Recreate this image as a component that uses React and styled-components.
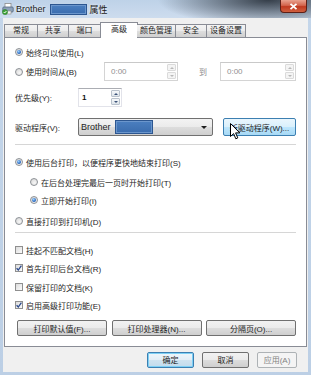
import React from 'react'
import styled, { createGlobalStyle, css } from 'styled-components'

const GlobalStyle = createGlobalStyle`
  html, body {
    margin: 0;
    padding: 0;
  }
  body {
    width: 311px;
    height: 375px;
    overflow: hidden;
    font-family: "Liberation Sans", "Noto Sans CJK SC", sans-serif;
    font-size: 8px;
    color: #1e1e1e;
  }
`

const Window = styled.div`
  width: 311px;
  height: 375px;
  display: flex;
  flex-direction: column;
  background: linear-gradient(#c4d6ea, #bccfe5);
`

const TitleBar = styled.div`
  height: 18px;
  flex: none;
  display: flex;
  align-items: center;
  padding-left: 2px;
  background:
    radial-gradient(ellipse 110px 26px at 268px 0, rgba(38, 46, 56, 0.9), rgba(38, 46, 56, 0)),
    linear-gradient(#bed2e8, #cddcee);
`

const TitleText = styled.span`
  font-size: 9px;
  color: #1a1a1a;
  margin-left: ${p => p.$ml || 0}px;
  text-shadow: 0 0 3px rgba(255, 255, 255, 0.9);
`

const Redacted = styled.span`
  display: inline-block;
  width: ${p => p.$w}px;
  height: ${p => p.$h}px;
  margin-left: ${p => p.$ml || 0}px;
  background: linear-gradient(#4b7fc0, #3a6cae);
  border: 1px solid #2c5690;
  box-shadow: inset 0 0 0 1px #6b96cc;
  box-sizing: border-box;
`

const CloseButton = styled.div`
  margin-left: auto;
  margin-right: 4px;
  align-self: flex-start;
  width: 27px;
  height: 13px;
  box-sizing: border-box;
  border: 1px solid #5e1f16;
  border-top: none;
  border-radius: 0 0 4px 4px;
  background: linear-gradient(#e9a28f, #d3654d 45%, #c03a20 55%, #d0603f);
  display: flex;
  align-items: center;
  justify-content: center;
`

const Client = styled.div`
  flex: 1;
  margin: 0 3px 3px 3px;
  padding: 4px 1px 0 1px;
  background: #f0f0f0;
  display: flex;
  flex-direction: column;
`

const TabStrip = styled.div`
  display: flex;
  align-items: flex-end;
  height: 16px;
  margin-bottom: -1px;
  position: relative;
  z-index: 1;
`

const Tab = styled.div`
  width: ${p => p.$w}px;
  box-sizing: border-box;
  border: 1px solid #898c95;
  border-bottom: none;
  border-left-width: ${p => (p.$first ? 1 : 0)}px;
  text-align: center;
  font-size: 8px;
  ${p =>
    p.$active
      ? css`
          height: 16px;
          line-height: 14px;
          background: #fff;
          border-left-width: 1px;
          margin-left: -1px;
          margin-right: -1px;
          width: ${p.$w + 2}px;
        `
      : css`
          height: 13px;
          margin-bottom: 1px;
          line-height: 12px;
          background: linear-gradient(#f4f4f4, #ebebeb 50%, #dedede 50%, #d0d0d0);
        `}
`

const Panel = styled.div`
  flex: 1;
  background: #fff;
  border: 1px solid #898c95;
  padding: 0 0 0 10px;
  display: flex;
  flex-direction: column;
`

const Row = styled.div`
  display: flex;
  align-items: center;
  height: ${p => p.$h || 14}px;
  margin-top: ${p => p.$mt || 0}px;
  padding-left: ${p => p.$indent || 0}px;
`

const Cell = styled.div`
  width: ${p => p.$w}px;
  flex: none;
  display: flex;
  align-items: center;
  padding-left: ${p => p.$pl || 0}px;
  box-sizing: border-box;
  color: ${p => (p.$disabled ? '#8d8d8d' : '#1e1e1e')};
`

const Separator = styled.div`
  height: 1px;
  margin: ${p => p.$mt}px 10px 0 0;
  background: #d6d6d6;
`

const RadioDot = styled.span`
  width: 8px;
  height: 8px;
  flex: none;
  box-sizing: border-box;
  border-radius: 50%;
  border: 1px solid #8d9196;
  background: radial-gradient(circle at 60% 65%, #f7f7f7, #d4d4d4);
  margin-right: 3px;
  display: flex;
  align-items: center;
  justify-content: center;
  ${p =>
    p.$checked &&
    css`
      &::after {
        content: '';
        width: 4px;
        height: 4px;
        border-radius: 50%;
        background: radial-gradient(circle at 40% 35%, #9fd4ff, #2a6bc4 60%, #16418a);
      }
    `}
`

const Box = styled.span`
  width: 8px;
  height: 8px;
  flex: none;
  box-sizing: border-box;
  border: 1px solid #8f8f8f;
  background: linear-gradient(135deg, #dcdcdc, #fbfbfb);
  margin-right: 3px;
  display: flex;
  align-items: center;
  justify-content: center;
`

const SpinBox = styled.div`
  width: ${p => p.$w}px;
  height: ${p => p.$h}px;
  flex: none;
  box-sizing: border-box;
  display: flex;
  align-items: center;
  background: #fff;
  border: 1px solid ${p => (p.$disabled ? '#d4d4d4' : '#e2e3ea')};
  border-top-color: ${p => (p.$disabled ? '#c9c9c9' : '#abadb3')};
  padding: 1px;
`

const SpinValue = styled.span`
  flex: 1;
  padding-left: ${p => p.$pl}px;
  font-size: 8px;
  color: ${p => (p.$disabled ? '#8f8f8f' : '#111')};
  font-weight: ${p => (p.$disabled ? 400 : 700)};
`

const SpinButtons = styled.div`
  width: 9px;
  align-self: stretch;
  display: flex;
  flex-direction: column;
  gap: 1px;
`

const SpinHalf = styled.div`
  flex: 1;
  border: 1px solid ${p => (p.$disabled ? '#dadada' : '#b9c2cc')};
  border-radius: 1px;
  background: ${p => (p.$disabled ? '#f4f4f4' : 'linear-gradient(#f6f8fa, #dde4ea)')};
  display: flex;
  align-items: center;
  justify-content: center;
  &::after {
    content: '';
    border-left: 2px solid transparent;
    border-right: 2px solid transparent;
    ${p => (p.$down ? 'border-top' : 'border-bottom')}: 2px solid
      ${p => (p.$disabled ? '#b8b8b8' : '#3c5278')};
  }
`

const Combo = styled.div`
  width: 135px;
  height: 18px;
  flex: none;
  box-sizing: border-box;
  border: 1px solid #707070;
  border-radius: 2px;
  background: linear-gradient(#f3f3f3, #ebebeb 50%, #dddddd 50%, #cfcfcf);
  display: flex;
  align-items: center;
  padding: 0 5px 0 2px;
  font-size: 9px;
  &::after {
    content: '';
    margin-left: auto;
    border-left: 3px solid transparent;
    border-right: 3px solid transparent;
    border-top: 3px solid #1e1e1e;
  }
`

const Button = styled.div`
  position: relative;
  width: ${p => p.$w}px;
  height: ${p => p.$h || 16}px;
  flex: none;
  box-sizing: border-box;
  border: 1px solid #707070;
  border-radius: 2px;
  background: linear-gradient(#f2f2f2, #ebebeb 50%, #dddddd 50%, #cfcfcf);
  display: flex;
  align-items: center;
  justify-content: center;
  font-size: 8px;
  color: #1e1e1e;
  ${p =>
    p.$hot &&
    css`
      border-color: #3c7fb1;
      background: linear-gradient(#eaf6fd, #d9f0fc 50%, #bee6fd 50%, #a7d9f5);
    `}
  ${p =>
    p.$default &&
    css`
      border-color: #3c7fb1;
      box-shadow: inset 0 0 0 1px #7dd0f5;
      background: linear-gradient(#eef6fb, #e2eef6 50%, #cfe3f0 50%, #c2dbec);
    `}
  ${p =>
    p.$disabled &&
    css`
      border-color: #adb2b5;
      background: #f4f4f4;
      color: #838383;
    `}
`

const ButtonRow = styled.div`
  display: flex;
  justify-content: space-between;
  width: 279px;
  margin: 8px 0 0 2px;
`

const Footer = styled.div`
  height: 25px;
  flex: none;
  display: flex;
  justify-content: flex-end;
  align-items: center;
  gap: 8px;
  padding-right: 10px;
`

const Cursor = styled.svg`
  position: absolute;
  left: 6px;
  top: 4px;
`

const Radio = ({ checked, children }) => (
  <>
    <RadioDot $checked={checked} />
    <span>{children}</span>
  </>
)

const Check = ({ checked, children }) => (
  <>
    <Box>
      {checked && (
        <svg width="6" height="6" viewBox="0 0 6 6">
          <path d="M0.6 3.2 L2.3 5 L5.4 0.6" fill="none" stroke="#2c4a8c" strokeWidth="1.3" />
        </svg>
      )}
    </Box>
    <span>{children}</span>
  </>
)

const Spin = ({ w, h, value, pl, disabled }) => (
  <SpinBox $w={w} $h={h} $disabled={disabled}>
    <SpinValue $pl={pl} $disabled={disabled}>{value}</SpinValue>
    <SpinButtons>
      <SpinHalf $disabled={disabled} />
      <SpinHalf $disabled={disabled} $down />
    </SpinButtons>
  </SpinBox>
)

const PrinterIcon = () => (
  <svg width="12" height="12" viewBox="0 0 12 12">
    <rect x="3" y="0.5" width="6" height="4" fill="#fff" stroke="#8a8a8a" strokeWidth="0.8" />
    <rect x="0.8" y="4" width="10.4" height="5" rx="1" fill="#8da2bb" stroke="#55687e" strokeWidth="0.8" />
    <rect x="3" y="8" width="6" height="3" fill="#f4f4f4" stroke="#8a8a8a" strokeWidth="0.6" />
    <circle cx="3" cy="9" r="2.6" fill="#3ea23a" stroke="#2a7a27" strokeWidth="0.5" />
    <path d="M1.7 9 L2.7 10 L4.4 8" fill="none" stroke="#fff" strokeWidth="0.9" />
  </svg>
)

const tabs = [
  { label: '常规', w: 34 },
  { label: '共享', w: 31 },
  { label: '端口', w: 32 },
  { label: '高级', w: 36, active: true },
  { label: '颜色管理', w: 39 },
  { label: '安全', w: 31 },
  { label: '设备设置', w: 39 },
]

const App = () => (
  <>
    <GlobalStyle />
    <Window>
      <TitleBar>
        <PrinterIcon />
        <TitleText $ml={2}>Brother</TitleText>
        <Redacted $w={37} $h={11} $ml={4} />
        <TitleText $ml={3}>属性</TitleText>
        <CloseButton>
          <svg width="9" height="7" viewBox="0 0 9 7">
            <path d="M1.5 0.8 L7.5 6.2 M7.5 0.8 L1.5 6.2" stroke="#fff" strokeWidth="1.8" />
          </svg>
        </CloseButton>
      </TitleBar>
      <Client>
        <TabStrip>
          {tabs.map((t, i) => (
            <Tab key={t.label} $w={t.w} $active={t.active} $first={i === 0}>
              {t.label}
            </Tab>
          ))}
        </TabStrip>
        <Panel>
          <Row $mt={7}>
            <Radio checked>始终可以使用(L)</Radio>
          </Row>
          <Row $mt={3} $h={19}>
            <Cell $w={89}>
              <Radio>使用时间从(B)</Radio>
            </Cell>
            <Spin w={74} h={19} value="0:00" pl={5} disabled />
            <Cell $w={42} $pl={21} $disabled>到</Cell>
            <Spin w={76} h={19} value="0:00" pl={5} disabled />
          </Row>
          <Row $mt={7} $h={19}>
            <Cell $w={63}>优先级(Y):</Cell>
            <Spin w={44} h={19} value="1" pl={2} />
          </Row>
          <Row $mt={11} $h={18}>
            <Cell $w={63}>驱动程序(V):</Cell>
            <Combo>
              Brother
              <Redacted $w={38} $h={14} $ml={4} />
            </Combo>
            <Button $w={73} $h={18} $hot style={{ marginLeft: 10 }}>
              新驱动程序(W)...
              <Cursor width="11" height="17" viewBox="0 0 11 17">
                <path
                  d="M0.5 0.5 L0.5 13.5 L3.6 10.6 L5.8 15.8 L7.8 14.9 L5.6 9.9 L9.8 9.9 Z"
                  fill="#fff"
                  stroke="#000"
                  strokeWidth="1"
                />
              </Cursor>
            </Button>
          </Row>
          <Separator $mt={8} />
          <Row $mt={10}>
            <Radio checked>使用后台打印，以便程序更快地结束打印(S)</Radio>
          </Row>
          <Row $mt={6} $indent={15}>
            <Radio>在后台处理完最后一页时开始打印(T)</Radio>
          </Row>
          <Row $mt={4} $indent={15}>
            <Radio checked>立即开始打印(I)</Radio>
          </Row>
          <Row $mt={7}>
            <Radio>直接打印到打印机(D)</Radio>
          </Row>
          <Separator $mt={4} />
          <Row $mt={10}>
            <Check>挂起不匹配文档(H)</Check>
          </Row>
          <Row $mt={4}>
            <Check checked>首先打印后台文档(R)</Check>
          </Row>
          <Row $mt={5}>
            <Check>保留打印的文档(K)</Check>
          </Row>
          <Row $mt={4}>
            <Check checked>启用高级打印功能(E)</Check>
          </Row>
          <ButtonRow>
            <Button $w={90}>打印默认值(F)...</Button>
            <Button $w={90}>打印处理器(N)...</Button>
            <Button $w={90}>分隔页(O)...</Button>
          </ButtonRow>
        </Panel>
        <Footer>
          <Button $w={47} $default>确定</Button>
          <Button $w={47}>取消</Button>
          <Button $w={40} $disabled>应用(A)</Button>
        </Footer>
      </Client>
    </Window>
  </>
)

export default App
